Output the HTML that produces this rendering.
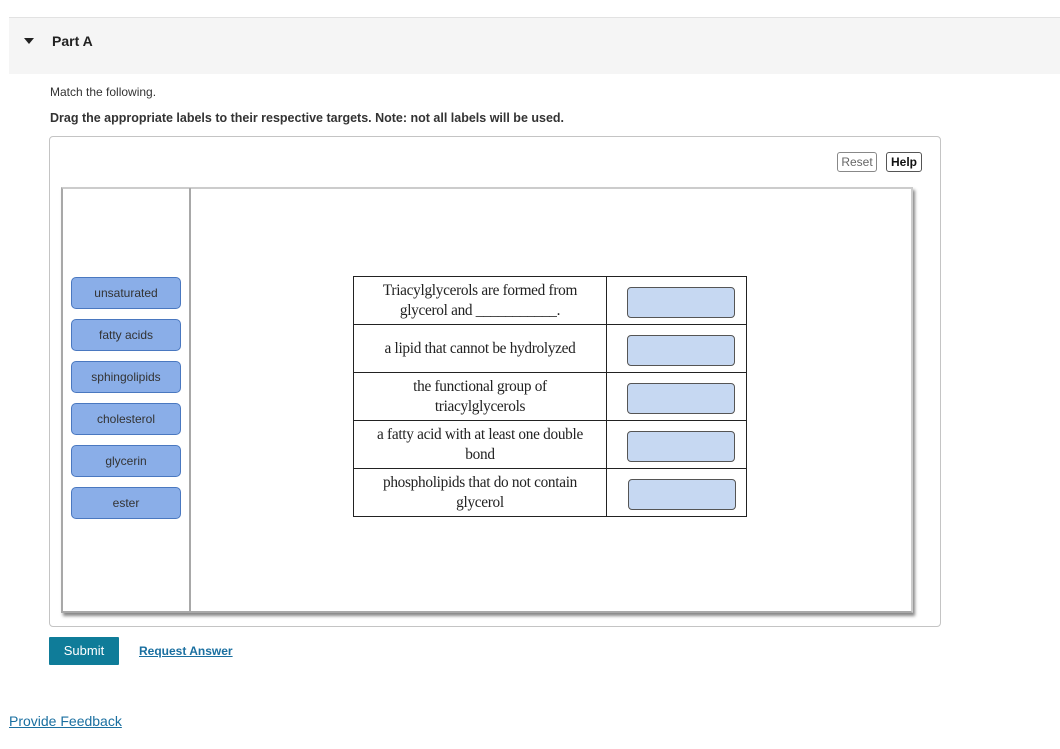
<!DOCTYPE html>
<html><head><style>
body{margin:0;width:1060px;height:749px;background:#fff;font-family:"Liberation Sans",Arial,sans-serif;position:relative;overflow:hidden;color:#222}
.a{position:absolute}
.hdr{left:9px;top:17px;width:1051px;height:56px;background:#f5f5f5;border-top:1px solid #e2e2e2}
.lbl{position:absolute;left:71px;width:108px;height:30px;background:#8aaee8;border:1px solid #4a78c0;border-radius:5px;font-size:12px;color:#333;text-align:center;line-height:30px}
table{position:absolute;left:353px;top:276px;border-collapse:collapse;font-family:"Liberation Serif",serif;font-size:15.3px;letter-spacing:-0.3px;color:#222}
td{border:1px solid #222;padding:0;height:47px;text-align:center;line-height:20px}
td.t{width:252px}
td.b{width:139px;position:relative}
.tg{position:absolute;left:20px;top:10px;width:106px;height:29px;background:#c6d8f2;border:1px solid #555;border-radius:4px}
.btn{position:absolute;top:152px;height:18px;border:1px solid #888;border-radius:3px;font-size:12px;line-height:18px;text-align:center;background:#fff}
</style></head><body>
<div class="a hdr"></div>
<div class="a" style="left:24px;top:38px;width:0;height:0;border-left:5px solid transparent;border-right:5px solid transparent;border-top:6px solid #222"></div>
<div class="a" style="left:52px;top:33px;font-size:14px;font-weight:bold">Part A</div>
<div class="a" style="left:50px;top:85px;font-size:12px;color:#333">Match the following.</div>
<div class="a" style="left:50px;top:111px;font-size:12.5px;font-weight:bold;color:#333">Drag the appropriate labels to their respective targets. Note: not all labels will be used.</div>
<div class="a" style="left:49px;top:136px;width:890px;height:489px;border:1px solid #c4c4c4;border-radius:4px"></div>
<div class="btn" style="left:837px;width:38px;color:#666">Reset</div>
<div class="btn" style="left:886px;width:34px;color:#111;font-weight:bold;border-color:#555">Help</div>
<div class="a" style="left:61px;top:187px;width:848px;height:422px;border:2px solid #a8a8a8;border-right-color:#ccc;border-top-color:#ccc;box-shadow:2px 3px 3px #888"></div>
<div class="a" style="left:189px;top:188px;width:2px;height:423px;background:#a8a8a8"></div>
<div class="lbl" style="top:277px">unsaturated</div>
<div class="lbl" style="top:319px">fatty acids</div>
<div class="lbl" style="top:361px">sphingolipids</div>
<div class="lbl" style="top:403px">cholesterol</div>
<div class="lbl" style="top:445px">glycerin</div>
<div class="lbl" style="top:487px">ester</div>
<table>
<tr><td class="t">Triacylglycerols are formed from<br>glycerol and ___________.</td><td class="b"><div class="tg"></div></td></tr>
<tr><td class="t">a lipid that cannot be hydrolyzed</td><td class="b"><div class="tg"></div></td></tr>
<tr><td class="t">the functional group of<br>triacylglycerols</td><td class="b"><div class="tg"></div></td></tr>
<tr><td class="t">a fatty acid with at least one double<br>bond</td><td class="b"><div class="tg"></div></td></tr>
<tr><td class="t">phospholipids that do not contain<br>glycerol</td><td class="b"><div class="tg" style="left:21px"></div></td></tr>
</table>
<div class="a" style="left:49px;top:637px;width:70px;height:28px;background:#0f7c99;color:#fff;font-size:13px;line-height:28px;text-align:center;border-radius:1px">Submit</div>
<div class="a" style="left:139px;top:644px;font-size:12px;font-weight:bold;color:#1a6fa0;text-decoration:underline">Request Answer</div>
<div class="a" style="left:9px;top:713px;font-size:14px;color:#1a6fa0;text-decoration:underline">Provide Feedback</div>
</body></html>
